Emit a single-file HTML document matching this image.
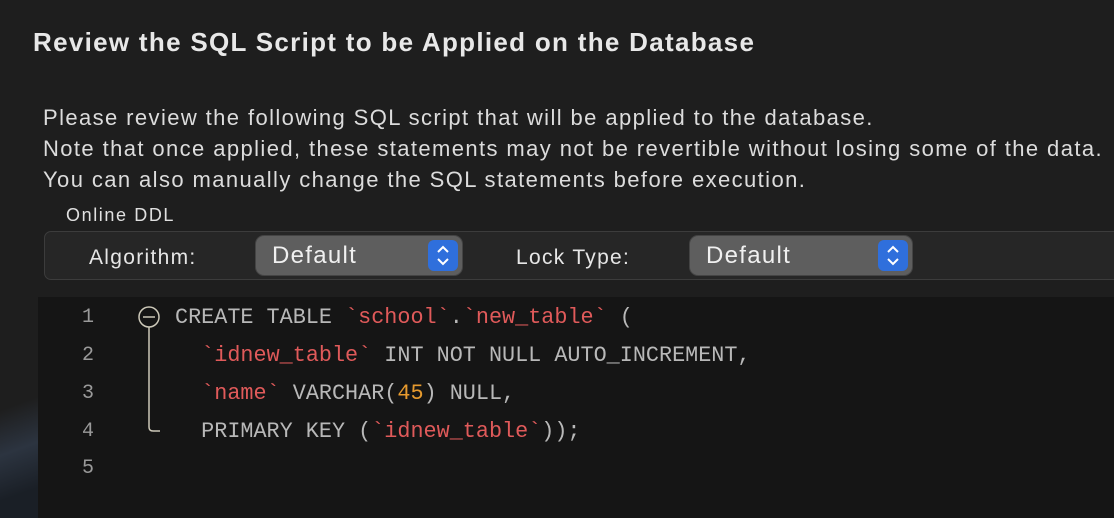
<!DOCTYPE html><html><head><style>
body{margin:0;width:1114px;height:518px;background:#1e1e1e;overflow:hidden;position:relative;font-family:"Liberation Sans",sans-serif;color:#e6e6e6}
.a{position:absolute;white-space:pre}
.t{left:33px;top:27px;font-size:26px;letter-spacing:1.3px;font-weight:bold;color:#e8e8e8}
.p{left:43px;font-size:22px;letter-spacing:1.4px;color:#dcdcdc}
.box{left:44px;top:231px;width:1080px;height:47px;border:1px solid #3c3c3c;border-radius:7px;background:#262626}
.pop{top:236px;height:39px;background:#5e5e5e;border-radius:8px;box-shadow:0 0 0 1px #444}
.pop span{position:absolute;left:16px;top:6px;font-size:24px;letter-spacing:1.3px;color:#f0f0f0}
.st{position:absolute;right:4px;top:4px;width:30px;height:31px;background:#2f6fdc;border-radius:6px}
.ed{left:38px;top:297px;width:1076px;height:221px;background:#151515}
.c{font-family:"Liberation Mono",monospace;font-size:21.8px;color:#b8b8b8}
.n{font-family:"Liberation Mono",monospace;font-size:20px;color:#9a9a9a;left:82px}
.r{color:#e05a5a}.o{color:#e69a2e}
.lb{font-size:21px;letter-spacing:1.3px;color:#e6e6e6;top:246px}
</style></head><body>
<div class="a" style="left:0;top:380px;width:38px;height:138px;background:linear-gradient(160deg,#1e1e1e 20%,#2c3440 50%,#1a1f26 80%)"></div>
<div class="a t">Review the SQL Script to be Applied on the Database</div>
<div class="a p" style="top:105px">Please review the following SQL script that will be applied to the database.</div>
<div class="a p" style="top:136px">Note that once applied, these statements may not be revertible without losing some of the data.</div>
<div class="a p" style="top:167px">You can also manually change the SQL statements before execution.</div>
<div class="a" style="left:66px;top:205px;font-size:18px;letter-spacing:1.6px;color:#e0e0e0">Online DDL</div>
<div class="a box"></div>
<div class="a lb" style="left:89px">Algorithm:</div>
<div class="a pop" style="left:256px;width:206px"><span>Default</span><div class="st"><svg width="30" height="31"><path d="M10 12l5-5 5 5M10 19l5 5 5-5" stroke="#fff" stroke-width="2" fill="none"/></svg></div></div>
<div class="a lb" style="left:516px">Lock Type:</div>
<div class="a pop" style="left:690px;width:222px"><span>Default</span><div class="st"><svg width="30" height="31"><path d="M10 12l5-5 5 5M10 19l5 5 5-5" stroke="#fff" stroke-width="2" fill="none"/></svg></div></div>
<div class="a ed"></div>
<div class="a n" style="top:306px">1</div>
<div class="a n" style="top:344px">2</div>
<div class="a n" style="top:382px">3</div>
<div class="a n" style="top:420px">4</div>
<div class="a n" style="top:457px">5</div>
<svg class="a" style="left:130px;top:300px" width="30" height="140"><circle cx="19" cy="17" r="10" stroke="#ccc8b8" stroke-width="1.5" fill="none"/><path d="M13 17h12M19 27v100q0 4 4 4h7" stroke="#ccc8b8" stroke-width="1.5" fill="none"/></svg>
<div class="a c" style="left:175px;top:305px">CREATE TABLE <span class="r">`school`</span>.<span class="r">`new_table`</span> (</div>
<div class="a c" style="left:175px;top:343px">  <span class="r">`idnew_table`</span> INT NOT NULL AUTO_INCREMENT,</div>
<div class="a c" style="left:175px;top:381px">  <span class="r">`name`</span> VARCHAR(<span class="o">45</span>) NULL,</div>
<div class="a c" style="left:175px;top:419px">  PRIMARY KEY (<span class="r">`idnew_table`</span>));</div>
</body></html>
